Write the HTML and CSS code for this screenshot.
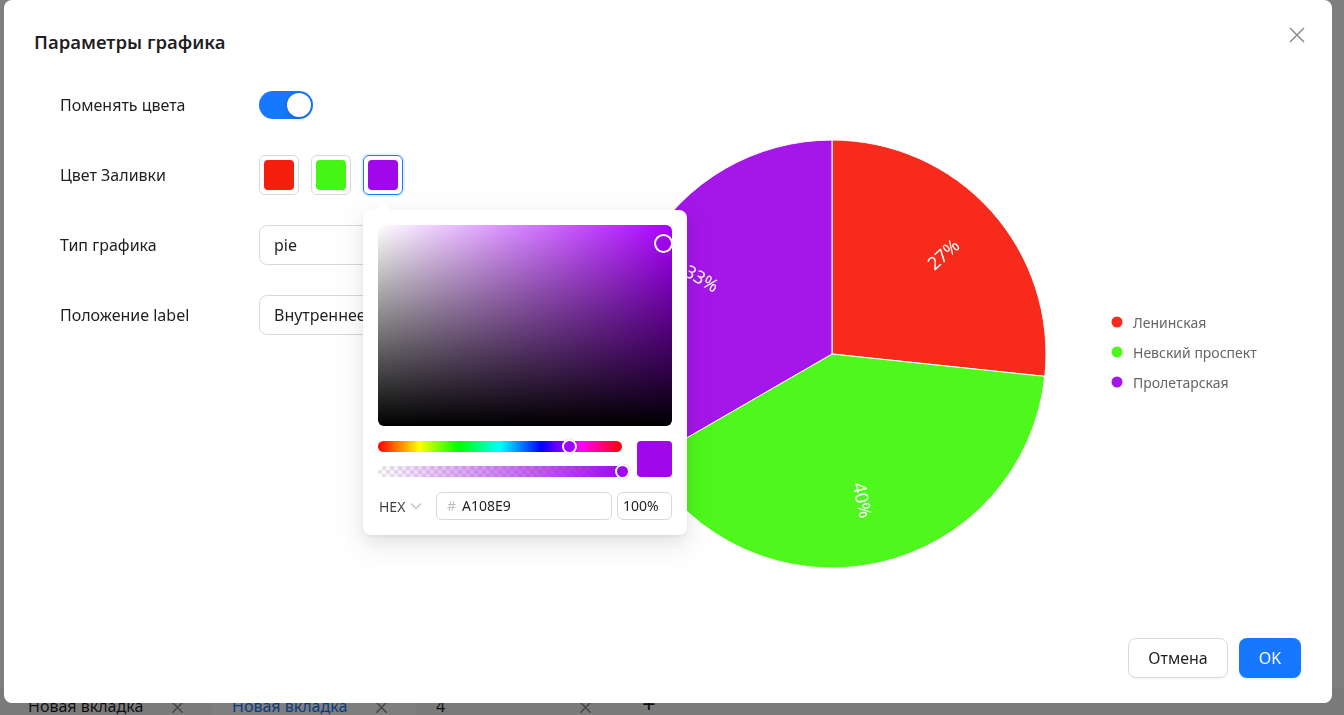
FILE: index.html
```html
<!DOCTYPE html>
<html lang="ru">
  <head>
    <meta charset="UTF-8" />
    <meta name="viewport" content="width=device-width, initial-scale=1.0" />
    <title>Параметры графика</title>
    <link rel="stylesheet" href="styles.css">
  </head>
  <body>
    <div class="page">
      <div class="tabs">
        <div class="tab">
          <span>Новая вкладка</span>
          <svg class="tab-close" viewBox="0 0 10 10"><path d="M1 1L9 9M9 1L1 9" /></svg>
        </div>
        <div class="tab tab-active">
          <span>Новая вкладка</span>
          <svg class="tab-close" viewBox="0 0 10 10"><path d="M1 1L9 9M9 1L1 9" /></svg>
        </div>
        <div class="tab">
          <span>4</span>
          <svg class="tab-close" viewBox="0 0 10 10"><path d="M1 1L9 9M9 1L1 9" /></svg>
        </div>
        <div class="tab-add">+</div>
      </div>
    </div>

    <div class="mask"></div>

    <div class="modal">
      <div class="modal-header">
        <h2 class="modal-title">Параметры графика</h2>
        <button class="modal-close" aria-label="Close">
          <svg viewBox="0 0 16 16"><path d="M1 1L15 15M15 1L1 15" /></svg>
        </button>
      </div>

      <div class="modal-body">
        <div class="form">
          <div class="form-row">
            <div class="form-label">Поменять цвета</div>
            <span class="switch"><span class="switch-knob"></span></span>
          </div>

          <div class="form-row">
            <div class="form-label">Цвет Заливки</div>
            <div class="swatches">
              <span class="swatch"><span class="swatch-fill fill-red"></span></span>
              <span class="swatch"><span class="swatch-fill fill-green"></span></span>
              <span class="swatch swatch-active">
                <span class="swatch-fill fill-purple"></span>
                <div class="picker">
                  <div class="picker-sat">
                    <span class="sat-handle"></span>
                  </div>
                  <div class="picker-sliders">
                    <div class="slider-col">
                      <div class="hue"><span class="hue-handle"></span></div>
                      <div class="alpha"><span class="alpha-handle"></span></div>
                    </div>
                    <div class="preview"></div>
                  </div>
                  <div class="picker-inputs">
                    <div class="format">
                      HEX
                      <svg viewBox="0 0 12 8"><path d="M1 1.5L6 6.5L11 1.5" /></svg>
                    </div>
                    <div class="hex-input"><span class="hash">#</span>A108E9</div>
                    <div class="alpha-input">100%</div>
                  </div>
                </div>
              </span>
            </div>
          </div>

          <div class="form-row">
            <div class="form-label">Тип графика</div>
            <div class="select">pie</div>
          </div>

          <div class="form-row">
            <div class="form-label">Положение label</div>
            <div class="select">Внутреннее</div>
          </div>
        </div>

        <svg class="chart" width="732" height="554" viewBox="0 0 732 554">
          <g stroke="#fff" stroke-width="1" stroke-linejoin="round">
            <path fill="#f72a1b" d="M232 270 L232 56 A214 214 0 0 1 444.83 292.37 Z" />
            <path fill="#4ff81c" d="M232 270 L444.83 292.37 A214 214 0 0 1 46.67 377 Z" />
            <path fill="#a517e8" d="M232 270 L46.67 377 A214 214 0 0 1 232 56 Z" />
          </g>
          <g class="pie-label" fill="#fff" text-anchor="middle" dominant-baseline="central">
            <text transform="translate(343 170) rotate(-42)">27%</text>
            <text transform="translate(263 416) rotate(78)">40%</text>
            <text transform="translate(102 194) rotate(30)">33%</text>
          </g>
          <g class="legend">
            <circle cx="517" cy="238" r="5.5" fill="#f72a1b" />
            <text x="533" y="238" dominant-baseline="central">Ленинская</text>
            <circle cx="517" cy="268" r="5.5" fill="#4ff81c" />
            <text x="533" y="268" dominant-baseline="central">Невский проспект</text>
            <circle cx="517" cy="298" r="5.5" fill="#a517e8" />
            <text x="533" y="298" dominant-baseline="central">Пролетарская</text>
          </g>
        </svg>
      </div>

      <div class="modal-footer">
        <button class="btn btn-default">Отмена</button>
        <button class="btn btn-primary">OK</button>
      </div>
    </div>
  </body>
</html>
```

FILE: styles.css
```css
* {
  box-sizing: border-box;
}
html,
body {
  margin: 0;
  height: 100%;
  overflow: hidden;
}
body {
  font-family: "Noto Sans", "Open Sans", sans-serif;
  color: rgba(0, 0, 0, 0.88);
  background-color: #fff;
}

/* page behind the modal */
.page {
  height: 100vh;
  display: flex;
  flex-direction: column;
  justify-content: flex-end;
}
.tabs {
  display: flex;
  height: 40px;
  margin-bottom: -13px;
  padding-left: 8px;
  background-color: #f5f5f5;
  font-size: 16px;
  line-height: 24px;
}
.tab {
  width: 204px;
  padding: 6px 28px 0 20px;
  display: flex;
  justify-content: space-between;
}
.tab-active {
  background-color: #fff;
  color: #1677ff;
}
.tab-close {
  width: 13px;
  height: 13px;
  margin-top: 7px;
  fill: none;
  stroke: #8c8c8c;
  stroke-width: 1.2;
}
.tab-add {
  padding: 4px 0 0 22px;
  font-size: 24px;
}
.mask {
  position: fixed;
  inset: 0;
  background-color: rgba(0, 0, 0, 0.5);
}

/* modal */
.modal {
  position: fixed;
  left: 4px;
  top: 0;
  width: 1328px;
  height: 703px;
  background-color: #fff;
  border-radius: 8px;
  display: flex;
  flex-direction: column;
}
.modal-header {
  height: 84px;
  padding: 0 27px 0 30px;
  display: flex;
  align-items: center;
  justify-content: space-between;
}
.modal-title {
  margin: 0;
  font-size: 18.5px;
  font-weight: 600;
  line-height: 24px;
}
.modal-close {
  align-self: flex-start;
  margin-top: 27px;
  width: 16px;
  height: 16px;
  padding: 0;
  border: none;
  background: none;
}
.modal-close svg {
  display: block;
  width: 16px;
  height: 16px;
  fill: none;
  stroke: #8c8c8c;
  stroke-width: 1.5;
}
.modal-body {
  flex: 1;
  display: flex;
}
.modal-footer {
  display: flex;
  justify-content: flex-end;
  gap: 11px;
  padding: 0 31px 25px;
}

/* form */
.form {
  flex-shrink: 0;
  width: 596px;
  padding: 1px 0 0 56px;
  display: flex;
  flex-direction: column;
  gap: 30px;
}
.form-row {
  display: flex;
  align-items: center;
  height: 40px;
}
.form-label {
  flex-shrink: 0;
  width: 199px;
  font-size: 16px;
}
.switch {
  position: relative;
  flex-shrink: 0;
  width: 54px;
  height: 28px;
  border-radius: 14px;
  background-color: #1677ff;
}
.switch-knob {
  position: absolute;
  top: 2px;
  right: 2px;
  width: 24px;
  height: 24px;
  border-radius: 50%;
  background-color: #fff;
  box-shadow: 0 2px 4px rgba(0, 35, 11, 0.2);
}
.swatches {
  display: flex;
  gap: 12px;
}
.swatch {
  position: relative;
  flex-shrink: 0;
  width: 40px;
  height: 40px;
  padding: 4px;
  border: 1px solid #d9d9d9;
  border-radius: 6px;
}
.swatch-active {
  border-color: #1677ff;
  box-shadow: 0 0 0 2px rgba(5, 145, 255, 0.1);
}
.swatch-fill {
  display: block;
  width: 30px;
  height: 30px;
  border-radius: 4px;
}
.fill-red {
  background-color: #f51f0e;
}
.fill-green {
  background-color: #45f514;
}
.fill-purple {
  background-color: #a108e9;
}
.select {
  width: 320px;
  height: 40px;
  padding: 0 14px;
  border: 1px solid #d9d9d9;
  border-radius: 8px;
  font-size: 16px;
  line-height: 38px;
}

/* color picker popover */
.picker {
  position: absolute;
  left: -1px;
  top: 54px;
  z-index: 10;
  width: 324px;
  padding: 15px;
  background-color: #fff;
  border-radius: 8px;
  box-shadow: 0 6px 16px 0 rgba(0, 0, 0, 0.08),
    0 3px 6px -4px rgba(0, 0, 0, 0.12), 0 9px 28px 8px rgba(0, 0, 0, 0.05);
}
.picker::before {
  content: '';
  position: absolute;
  left: 15px;
  top: -5px;
  width: 11px;
  height: 11px;
  background-color: #fff;
  transform: rotate(45deg);
  border-top-left-radius: 2px;
}
.picker-sat {
  position: relative;
  height: 201px;
  border-radius: 6px;
  background: linear-gradient(to top, #000, rgba(0, 0, 0, 0)),
    linear-gradient(to right, #fff, rgba(255, 255, 255, 0)), #aa00ff;
}
.sat-handle {
  position: absolute;
  left: 276px;
  top: 9px;
  width: 19px;
  height: 19px;
  border: 2px solid #fff;
  border-radius: 50%;
  box-shadow: 0 0 1px rgba(0, 0, 0, 0.3);
}
.picker-sliders {
  display: flex;
  gap: 15px;
  margin-top: 15px;
}
.slider-col {
  flex: 1;
  display: flex;
  flex-direction: column;
  gap: 14px;
}
.hue,
.alpha {
  position: relative;
  height: 11px;
  border-radius: 6px;
}
.hue {
  background: linear-gradient(
    to right,
    #f00 0%,
    #ff0 17%,
    #0f0 33%,
    #0ff 50%,
    #00f 67%,
    #f0f 83%,
    #f00 100%
  );
}
.alpha {
  background: linear-gradient(to right, rgba(161, 8, 233, 0), #a108e9),
    repeating-conic-gradient(#e6e6e6 0 25%, #fff 0 50%) 0 0 / 8px 8px;
}
.hue-handle,
.alpha-handle {
  position: absolute;
  top: -2px;
  width: 15px;
  height: 15px;
  border: 2px solid #fff;
  border-radius: 50%;
  box-shadow: 0 0 1px rgba(0, 0, 0, 0.4);
}
.hue-handle {
  left: 184px;
  background-color: #a100ff;
}
.alpha-handle {
  left: 237px;
  background-color: #a108e9;
}
.preview {
  width: 35px;
  height: 36px;
  border-radius: 4px;
  background-color: #a108e9;
}
.picker-inputs {
  display: flex;
  align-items: center;
  margin-top: 15px;
  height: 28px;
  font-size: 14px;
}
.format {
  width: 58px;
  padding-left: 1px;
  display: flex;
  align-items: center;
  gap: 5px;
  color: rgba(0, 0, 0, 0.75);
}
.format svg {
  width: 12px;
  height: 8px;
  fill: none;
  stroke: #bfbfbf;
  stroke-width: 1.2;
}
.hex-input,
.alpha-input {
  height: 28px;
  border: 1px solid #d9d9d9;
  border-radius: 6px;
  line-height: 26px;
}
.hex-input {
  width: 176px;
  padding-left: 10px;
}
.hash {
  margin-right: 6px;
  color: #bfbfbf;
}
.alpha-input {
  width: 55px;
  margin-left: 5px;
  padding-left: 5px;
}

/* chart */
.chart {
  display: block;
}
.pie-label {
  font-size: 18px;
}
.legend {
  font-size: 14px;
  fill: #666;
}

/* buttons */
.btn {
  height: 40px;
  border-radius: 8px;
  font-family: inherit;
  font-size: 16px;
  padding: 0;
}
.btn-default {
  width: 100px;
  border: 1px solid #d9d9d9;
  background-color: #fff;
  color: rgba(0, 0, 0, 0.88);
  box-shadow: 0 2px 0 rgba(0, 0, 0, 0.02);
}
.btn-primary {
  width: 62px;
  border: none;
  background-color: #1677ff;
  color: #fff;
  box-shadow: 0 2px 0 rgba(5, 145, 255, 0.1);
}
```
